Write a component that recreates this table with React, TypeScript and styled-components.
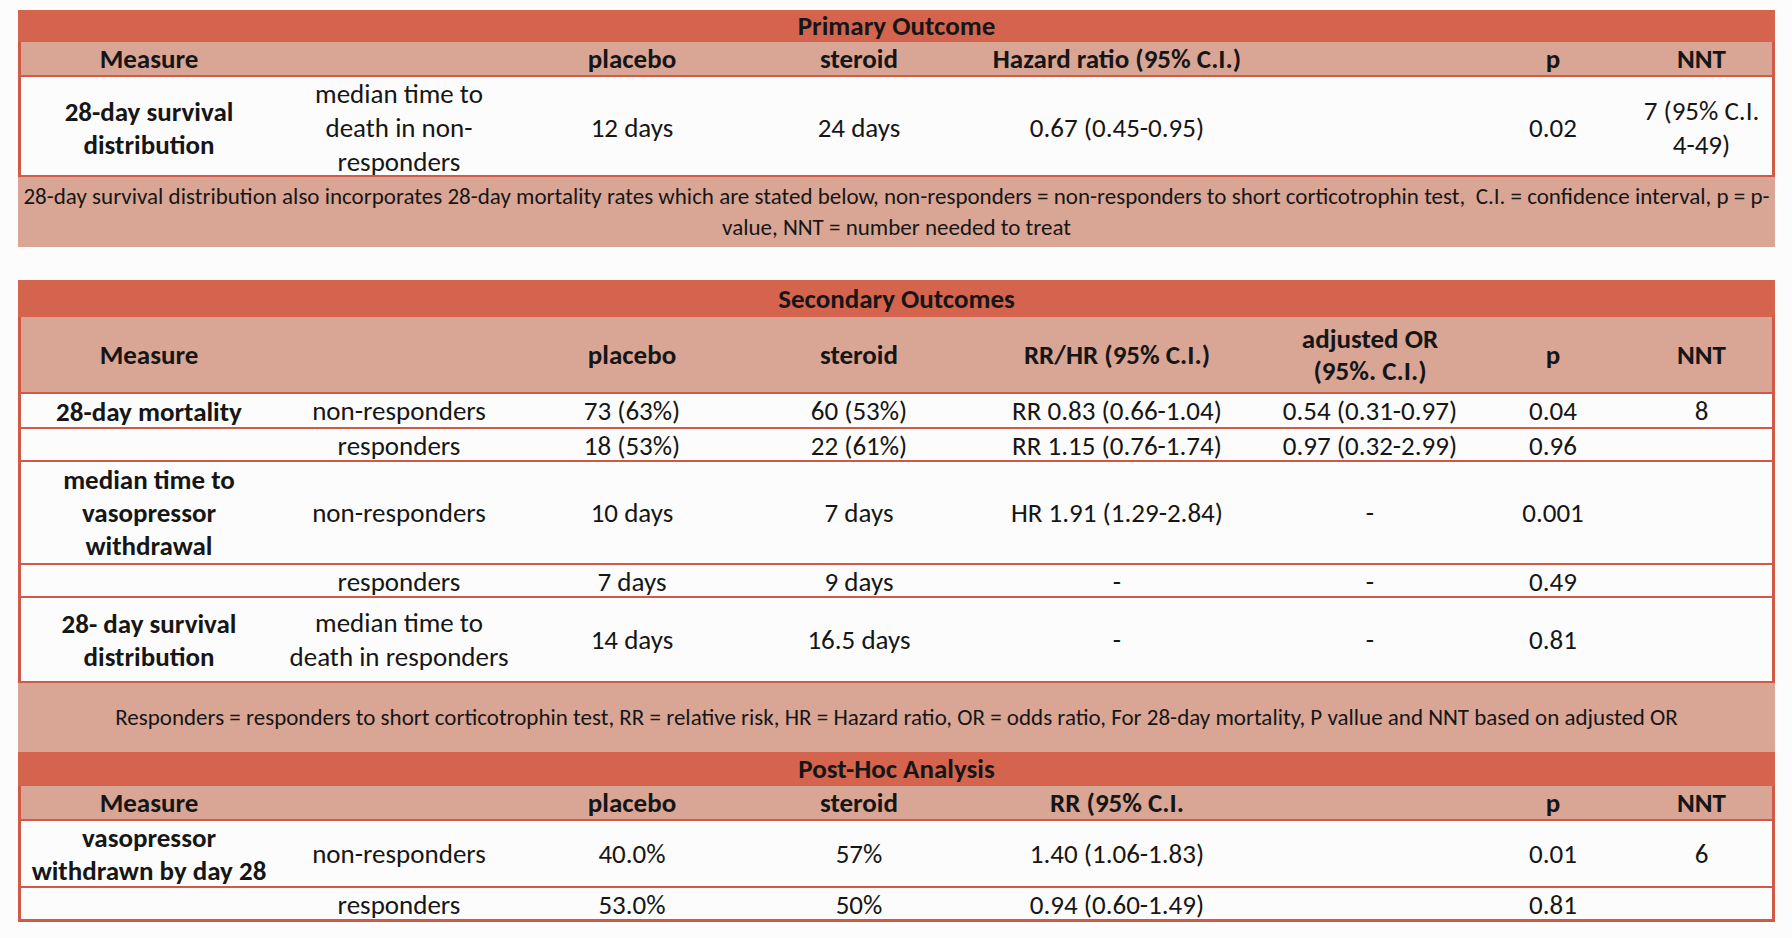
import React from "react";
import styled, { createGlobalStyle, css } from "styled-components";

const CORAL = "#d4644e";
const SALMON = "#d9a595";
const LINE = "#d05a46";
const PAPER = "#fcfcfc";

const Global = createGlobalStyle`
  html, body { margin: 0; padding: 0; background: ${PAPER}; }
  body { font-family: "Carlito", "Calibri", "Lato", "Liberation Sans", sans-serif; color: #161616; }
  * { box-sizing: border-box; }
`;

const Page = styled.div`
  display: flex;
  flex-direction: column;
  padding: 10px 0 0 18px;
  width: 1792px;
  height: 938px;
`;

const Section = styled.section<{ $gapAfter?: number }>`
  display: flex;
  flex-direction: column;
  width: 1757px;
  margin-bottom: ${(p) => p.$gapAfter ?? 0}px;
`;

const COLS = "262px 238px 228px 226px 290px 216px 150px 147px";

type Variant = "title" | "head" | "data" | "note";

const Row = styled.div<{ $h: number; $v: Variant; $last?: boolean }>`
  height: ${(p) => p.$h}px;
  font-size: 27px;
  line-height: 34px;
  ${(p) =>
    p.$v === "title" &&
    css`
      background: ${CORAL};
      display: flex;
      align-items: center;
      justify-content: center;
      font-weight: 700;
    `}
  ${(p) =>
    p.$v === "head" &&
    css`
      background: ${SALMON};
      display: grid;
      grid-template-columns: ${COLS};
      font-weight: 700;
      line-height: 32px;
      border-bottom: 2px solid ${LINE};
      box-shadow: inset 3px 0 0 ${LINE}, inset -3px 0 0 ${LINE};
    `}
  ${(p) =>
    p.$v === "data" &&
    css`
      background: ${PAPER};
      display: grid;
      grid-template-columns: ${COLS};
      border-bottom: ${p.$last ? 3 : 2}px solid ${LINE};
      box-shadow: inset 3px 0 0 ${LINE}, inset -3px 0 0 ${LINE};
    `}
  ${(p) =>
    p.$v === "note" &&
    css`
      background: ${SALMON};
      display: flex;
      align-items: center;
      justify-content: center;
      text-align: center;
      font-size: 23px;
      line-height: 31px;
      padding: 0 2px;
    `}
`;

const Cell = styled.div<{ $bold?: boolean }>`
  display: flex;
  align-items: center;
  justify-content: center;
  text-align: center;
  font-weight: ${(p) => (p.$bold ? 700 : "inherit")};
  line-height: ${(p) => (p.$bold ? "33px" : "inherit")};
  white-space: nowrap;
`;

type RowData = { h: number; cells: React.ReactNode[]; last?: boolean };

const DataRows: React.FC<{ rows: RowData[] }> = ({ rows }) => (
  <>
    {rows.map((r, i) => (
      <Row key={i} $v="data" $h={r.h} $last={r.last}>
        {r.cells.map((c, j) => (
          <Cell key={j} $bold={j === 0}>
            <span>{c}</span>
          </Cell>
        ))}
      </Row>
    ))}
  </>
);

const HeadRow: React.FC<{ h: number; cells: React.ReactNode[] }> = ({ h, cells }) => (
  <Row $v="head" $h={h}>
    {cells.map((c, j) => (
      <Cell key={j}>
        <span>{c}</span>
      </Cell>
    ))}
  </Row>
);

const br = <br />;

export default function App() {
  return (
    <>
      <Global />
      <Page>
        <Section $gapAfter={33}>
          <Row $v="title" $h={32}>Primary Outcome</Row>
          <HeadRow
            h={35}
            cells={["Measure", "", "placebo", "steroid", "Hazard ratio (95% C.I.)", "", "p", "NNT"]}
          />
          <DataRows
            rows={[
              {
                h: 100,
                cells: [
                  <>28-day survival{br}distribution</>,
                  <>median time to{br}death in non-{br}responders</>,
                  "12 days",
                  "24 days",
                  "0.67 (0.45-0.95)",
                  "",
                  "0.02",
                  <>7 (95% C.I.{br}4-49)</>,
                ],
              },
            ]}
          />
          <Row $v="note" $h={70}>
            <span>
              28-day survival distribution also incorporates 28-day mortality rates which are stated below,
              non-responders = non-responders to short corticotrophin test,&nbsp; C.I. = confidence interval, p = p-
              <br />
              value, NNT = number needed to treat
            </span>
          </Row>
        </Section>

        <Section>
          <Row $v="title" $h={37}>Secondary Outcomes</Row>
          <HeadRow
            h={77}
            cells={[
              "Measure",
              "",
              "placebo",
              "steroid",
              "RR/HR (95% C.I.)",
              <>adjusted OR{br}(95%. C.I.)</>,
              "p",
              "NNT",
            ]}
          />
          <DataRows
            rows={[
              {
                h: 35,
                cells: ["28-day mortality", "non-responders", "73 (63%)", "60 (53%)", "RR 0.83 (0.66-1.04)", "0.54 (0.31-0.97)", "0.04", "8"],
              },
              {
                h: 33,
                cells: ["", "responders", "18 (53%)", "22 (61%)", "RR 1.15 (0.76-1.74)", "0.97 (0.32-2.99)", "0.96", ""],
              },
              {
                h: 103,
                cells: [
                  <>median time to{br}vasopressor{br}withdrawal</>,
                  "non-responders",
                  "10 days",
                  "7 days",
                  "HR 1.91 (1.29-2.84)",
                  "-",
                  "0.001",
                  "",
                ],
              },
              { h: 33, cells: ["", "responders", "7 days", "9 days", "-", "-", "0.49", ""] },
              {
                h: 85,
                cells: [
                  <>28- day survival{br}distribution</>,
                  <>median time to{br}death in responders</>,
                  "14 days",
                  "16.5 days",
                  "-",
                  "-",
                  "0.81",
                  "",
                ],
              },
            ]}
          />
          <Row $v="note" $h={69}>
            <span>
              Responders = responders to short corticotrophin test, RR = relative risk, HR = Hazard ratio, OR = odds
              ratio, For 28-day mortality, P vallue and NNT based on adjusted OR
            </span>
          </Row>
          <Row $v="title" $h={34}>Post-Hoc Analysis</Row>
          <HeadRow h={35} cells={["Measure", "", "placebo", "steroid", "RR (95% C.I.", "", "p", "NNT"]} />
          <DataRows
            rows={[
              {
                h: 67,
                cells: [
                  <>vasopressor{br}withdrawn by day 28</>,
                  "non-responders",
                  "40.0%",
                  "57%",
                  "1.40 (1.06-1.83)",
                  "",
                  "0.01",
                  "6",
                ],
              },
              {
                h: 34,
                last: true,
                cells: ["", "responders", "53.0%", "50%", "0.94 (0.60-1.49)", "", "0.81", ""],
              },
            ]}
          />
        </Section>
      </Page>
    </>
  );
}
